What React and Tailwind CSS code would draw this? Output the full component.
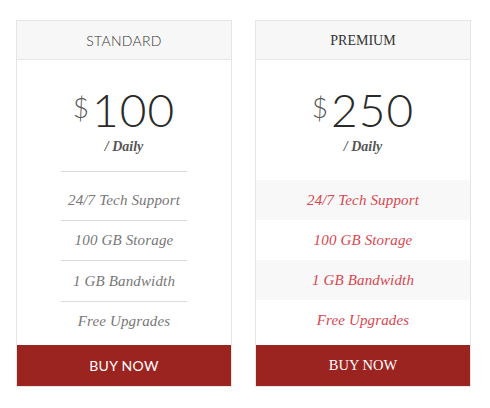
import React from "react";

const serif = { fontFamily: '"Liberation Serif", serif' };

function Card({ title, price, variant }) {
  const premium = variant === "premium";
  const features = ["24/7 Tech Support", "100 GB Storage", "1 GB Bandwidth", "Free Upgrades"];
  const stdHeights = ["h-[41px]", "h-[40px]", "h-[41px]"];
  return (
    <div className="w-[216px] border border-[#e6e6e6] bg-white flex flex-col">
      <div
        className={`h-[39px] bg-[#f7f7f7] border-b border-[#e8e8e8] flex items-center justify-center text-[#333] ${
          premium ? "font-['Liberation_Serif',serif] text-[14px] pt-[1px]" : "font-['Lato',sans-serif] font-light text-[14px] tracking-[0.3px]"
        }`}
      >
        {title}
      </div>
      <div className={`${premium ? "h-[120px]" : "h-[111px]"} flex flex-col items-center`}>
        <div className="flex items-start mt-[27px] text-[#2a2a2a] font-['Lato',sans-serif]">
          <span className="text-[28px] font-light leading-none mt-[6px] mr-[3px] text-[#555]">$</span>
          <span className="text-[46px] font-light leading-[46px] tracking-[1px]">{price}</span>
        </div>
        <div
          className="mt-[7px] text-[14px] italic font-bold text-[#555] leading-none"
          style={serif}
        >
          / Daily
        </div>
      </div>
      {!premium && <div className="mx-[44px] h-px bg-[#dcdcdc]" />}
      <div className={`flex flex-col ${premium ? "" : "pt-[8px] px-[44px]"}`}>
        {features.map((f, i) => {
          const last = i === features.length - 1;
          let cls = "flex items-center justify-center italic text-[15px] tracking-[0.15px] ";
          if (premium) {
            cls += "text-[#d9464f] " + (i % 2 === 0 ? "bg-[#f8f8f8]" : "bg-white");
            cls += last ? " h-[45px] pb-[5px]" : " h-[40px]";
          } else {
            cls += "text-[#777] ";
            cls += last ? "h-[43px] pb-[4px]" : stdHeights[i] + " border-b border-[#dcdcdc]";
          }
          return (
            <div key={f} className={cls} style={serif}>
              {f}
            </div>
          );
        })}
      </div>
      <div
        className={`h-[41px] bg-[#9c2420] text-white flex items-center justify-center ${
          premium
            ? "font-['Liberation_Serif',serif] text-[14.5px]"
            : "font-['Lato',sans-serif] text-[14px] tracking-[0.3px]"
        }`}
      >
        BUY NOW
      </div>
    </div>
  );
}

export default function App() {
  return (
    <div className="w-[490px] h-[408px] bg-white">
      <div className="flex gap-[23px] pl-[16px] pt-[20px]">
        <Card title="STANDARD" price="100" variant="standard" />
        <Card title="PREMIUM" price="250" variant="premium" />
      </div>
    </div>
  );
}
